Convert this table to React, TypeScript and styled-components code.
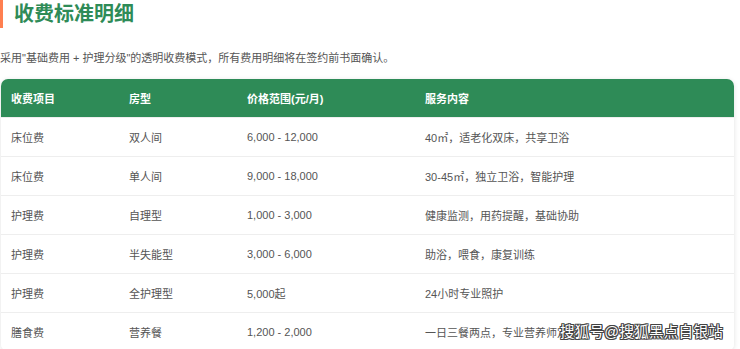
import React from "react";
import styled, { createGlobalStyle } from "styled-components";

const GlobalStyle = createGlobalStyle`
  html, body {
    margin: 0;
    padding: 0;
    background: #fff;
    font-family: "Liberation Sans", "Noto Sans CJK SC", sans-serif;
  }
`;

const Page = styled.div`
  position: relative;
  width: 740px;
  height: 349px;
  overflow: hidden;
  padding: 0 6px 0 1px;
  box-sizing: border-box;
`;

const Title = styled.h2`
  margin: 0;
  height: 28px;
  border-left: 3px solid #ff7f50;
  padding-left: 11px;
  margin-left: -1px;
  font-size: 20px;
  line-height: 28px;
  font-weight: 700;
  color: #2e8b57;
`;

const Intro = styled.p`
  margin: 22px 0 0 -1px;
  font-size: 11px;
  line-height: 16px;
  color: #555;
`;

const Table = styled.table`
  margin-top: 13px;
  width: 733px;
  border-collapse: separate;
  border-spacing: 0;
  table-layout: fixed;
  border-radius: 7px;
  overflow: hidden;
  box-shadow: 0 1px 5px rgba(0, 0, 0, 0.12);
  font-size: 11px;
`;

const HeadCell = styled.th<{ $w: number }>`
  width: ${(p) => p.$w}px;
  background: #2e8b57;
  color: #fff;
  font-weight: 700;
  text-align: left;
  height: 38px;
  padding: 0 10px;
  box-sizing: border-box;
`;

const Cell = styled.td`
  height: 38px;
  padding: 0 10px;
  color: #555;
  border-top: 1px solid #eee;
  background: #fff;
`;

const Watermark = styled.div`
  position: absolute;
  right: 17px;
  bottom: 8px;
  font-size: 14.5px;
  font-weight: 400;
  color: #fff;
  letter-spacing: 0.3px;
  text-shadow: -1px -1px 0 #444, 1px -1px 0 #444, -1px 1px 0 #444, 1px 1px 0 #444,
    0 1px 0 #444, 1px 0 0 #444, 0 -1px 0 #444, -1px 0 0 #444;
`;

const columns = [
  { label: "收费项目", w: 118 },
  { label: "房型", w: 118 },
  { label: "价格范围(元/月)", w: 178 },
  { label: "服务内容", w: 319 },
];

const rows = [
  ["床位费", "双人间", "6,000 - 12,000", "40㎡，适老化双床，共享卫浴"],
  ["床位费", "单人间", "9,000 - 18,000", "30-45㎡，独立卫浴，智能护理"],
  ["护理费", "自理型", "1,000 - 3,000", "健康监测，用药提醒，基础协助"],
  ["护理费", "半失能型", "3,000 - 6,000", "助浴，喂食，康复训练"],
  ["护理费", "全护理型", "5,000起", "24小时专业照护"],
  ["膳食费", "营养餐", "1,200 - 2,000", "一日三餐两点，专业营养师定制"],
];

const App: React.FC = () => {
  return (
    <Page>
      <GlobalStyle />
      <Title>收费标准明细</Title>
      <Intro>
        采用"基础费用 + 护理分级"的透明收费模式，所有费用明细将在签约前书面确认。
      </Intro>
      <Table>
        <thead>
          <tr>
            {columns.map((c) => (
              <HeadCell key={c.label} $w={c.w}>
                {c.label}
              </HeadCell>
            ))}
          </tr>
        </thead>
        <tbody>
          {rows.map((r, i) => (
            <tr key={i}>
              {r.map((v, j) => (
                <Cell key={j}>{v}</Cell>
              ))}
            </tr>
          ))}
        </tbody>
      </Table>
      <Watermark>搜狐号@搜狐黑点自银站</Watermark>
    </Page>
  );
};

export default App;
